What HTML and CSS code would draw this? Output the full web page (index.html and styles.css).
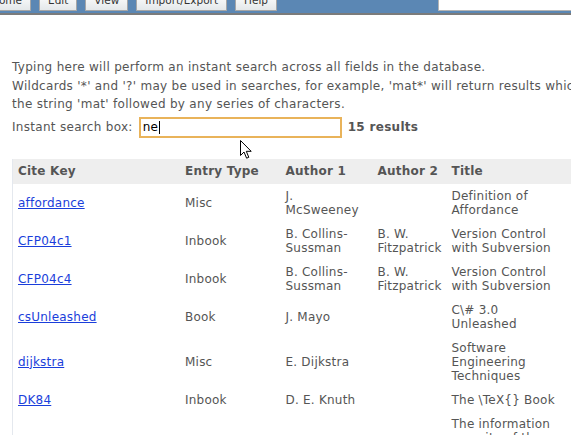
FILE: index.html
```html
<!DOCTYPE html>
<html>
<head>
<meta charset="utf-8">
<link rel="stylesheet" href="styles.css">
</head>
<body>
<header class="topbar">
  <nav class="menu">
    <span class="tab">Home</span>
    <span class="tab">Edit</span>
    <span class="tab">View</span>
    <span class="tab">Import/Export</span>
    <span class="tab">Help</span>
  </nav>
  <div class="topsearch"></div>
</header>
<main class="content">
  <p class="intro">Typing here will perform an instant search across all fields in the database.<br>
  Wildcards '*' and '?' may be used in searches, for example, 'mat*' will return results which contain<br>
  the string 'mat' followed by any series of characters.<br>
  <span class="searchrow">Instant search box: <span class="searchinput">ne<span class="caret"></span></span> <b class="count">15 results</b></span></p>
  <div class="pointer">
    <svg width="13" height="20" viewBox="0 0 13 20"><path d="M0.5 0.5 L0.5 15.5 L4 12 L6.6 18.2 L8.8 17.3 L6.3 11.3 L11.2 11.3 Z" fill="#fff" stroke="#000" stroke-width="1" stroke-linejoin="round"/></svg>
  </div>
  <table class="results">
    <thead>
      <tr><th class="c1">Cite Key</th><th class="c2">Entry Type</th><th class="c3">Author 1</th><th class="c4">Author 2</th><th class="c5">Title</th><th class="c6">Year</th></tr>
    </thead>
    <tbody>
      <tr><td><a href="#">affordance</a></td><td>Misc</td><td>J. McSweeney</td><td></td><td>Definition of Affordance</td><td></td></tr>
      <tr><td><a href="#">CFP04c1</a></td><td>Inbook</td><td>B. Collins-Sussman</td><td>B. W. Fitzpatrick</td><td>Version Control with Subversion</td><td></td></tr>
      <tr><td><a href="#">CFP04c4</a></td><td>Inbook</td><td>B. Collins-Sussman</td><td>B. W. Fitzpatrick</td><td>Version Control with Subversion</td><td></td></tr>
      <tr><td><a href="#">csUnleashed</a></td><td>Book</td><td>J. Mayo</td><td></td><td>C\# 3.0 Unleashed</td><td></td></tr>
      <tr><td><a href="#">dijkstra</a></td><td>Misc</td><td>E. Dijkstra</td><td></td><td>Software Engineering Techniques</td><td></td></tr>
      <tr><td><a href="#">DK84</a></td><td>Inbook</td><td>D. E. Knuth</td><td></td><td>The \TeX{} Book</td><td></td></tr>
      <tr><td><a href="#">infosec</a></td><td>Misc</td><td></td><td></td><td>The information security of the modern web applications</td><td></td></tr>
    </tbody>
  </table>
</main>
</body>
</html>
```
FILE: styles.css
```css
html, body {
  margin: 0;
  padding: 0;
  background: #fff;
  overflow: hidden;
}
body {
  font-family: "DejaVu Sans", Verdana, sans-serif;
  font-size: 12px;
  letter-spacing: 0.22px;
  color: #555;
  width: 700px;
}
.topbar {
  display: flex;
  align-items: flex-end;
  height: 13px;
  background: #5b87b4;
  border-bottom: 2px solid #7b7b7b;
}
.menu {
  display: flex;
  gap: 8px;
  margin-left: -18px;
  margin-bottom: 2px;
}
.tab {
  display: block;
  font-size: 10.5px;
  letter-spacing: 0;
  line-height: 14px;
  padding: 0 8px 3px;
  color: #333;
  background: linear-gradient(#ffffff, #e4e8ea);
  border: 1px solid #a6a6a6;
  border-top: none;
}
.topsearch {
  align-self: flex-start;
  margin-left: 161px;
  width: 200px;
  height: 10px;
  background: #fff;
  border: 1px solid #b4b4b4;
  border-top: none;
}
.content {
  position: relative;
  padding: 0 12px;
}
.intro {
  margin: 43px 0 0;
  line-height: 18.5px;
  letter-spacing: 0.3px;
  white-space: nowrap;
}
.searchrow {
  display: inline-flex;
  align-items: center;
  gap: 6px;
  margin-top: 3px;
  letter-spacing: 0.3px;
}
.searchinput {
  display: inline-flex;
  align-items: center;
  box-sizing: border-box;
  width: 203px;
  height: 21px;
  padding: 0 2px;
  border: 2px solid #e9b35a;
  color: #000;
  background: #fff;
}
.caret {
  display: inline-block;
  width: 1px;
  height: 13px;
  background: #000;
  margin-left: 1px;
}
.count {
  color: #555;
}
.pointer {
  position: absolute;
  left: 240px;
  top: 82px;
  z-index: 2;
}
.pointer svg {
  display: block;
}
.results {
  margin-top: 21px;
  border-collapse: collapse;
  table-layout: fixed;
  width: 680px;
  border-left: 1px solid #e4e8ee;
}
.results th,
.results td {
  text-align: left;
  vertical-align: middle;
  padding: 5px 6px 5px 5px;
  line-height: 14px;
}
.results th {
  background: #eeeeee;
  font-weight: bold;
  color: #555;
  padding: 5px 6px 6px 5px;
}
.c1 { width: 156px; }
.c2 { width: 89px; }
.c3 { width: 81px; }
.c4 { width: 63px; }
.c5 { width: 111px; }
.results a {
  color: #1a3edb;
}
```
